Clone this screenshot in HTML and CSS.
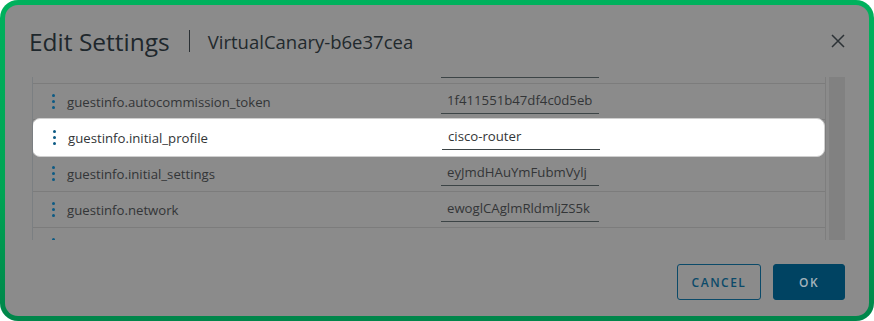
FILE: index.html
```html
<!DOCTYPE html>
<html lang="en">
<head>
    <meta charset="UTF-8">
    <meta name="viewport" content="width=device-width, initial-scale=1.0">
    <title>Edit Settings</title>
    <link rel="stylesheet" href="styles.css">
</head>
<body>

    <div class="frame">
        <div class="modal">
            <div class="modal-header">
                <h2 class="modal-title">Edit Settings</h2>
                <span class="title-sep"></span>
                <span class="vm-name">VirtualCanary-b6e37cea</span>
                <button class="close-btn" aria-label="Close">
                    <svg width="14" height="14" viewBox="0 0 14 14">
                        <path d="M1 1 L13 13 M13 1 L1 13" stroke="#2c3236" stroke-width="1.5" fill="none"/>
                    </svg>
                </button>
            </div>

            <div class="grid-wrap">
                <div class="grid-viewport">
                    <div class="grid-rows">
                        <div class="row">
                            <span class="kebab"><i></i><i></i><i></i></span>
                            <span class="key"></span>
                            <span class="value"></span>
                        </div>
                        <div class="row">
                            <span class="kebab"><i></i><i></i><i></i></span>
                            <span class="key">guestinfo.autocommission_token</span>
                            <span class="value">1f411551b47df4c0d5eb</span>
                        </div>
                        <div class="row selected">
                            <span class="kebab"><i></i><i></i><i></i></span>
                            <span class="key">guestinfo.initial_profile</span>
                            <span class="value">cisco-router</span>
                        </div>
                        <div class="row">
                            <span class="kebab"><i></i><i></i><i></i></span>
                            <span class="key">guestinfo.initial_settings</span>
                            <span class="value">eyJmdHAuYmFubmVylj</span>
                        </div>
                        <div class="row">
                            <span class="kebab"><i></i><i></i><i></i></span>
                            <span class="key">guestinfo.network</span>
                            <span class="value">ewoglCAglmRldmljZS5k</span>
                        </div>
                        <div class="row">
                            <span class="kebab"><i></i><i></i><i></i></span>
                            <span class="key"></span>
                            <span class="value"></span>
                        </div>
                    </div>
                </div>
                <div class="scrollbar"></div>
            </div>

            <div class="modal-footer">
                <button class="btn btn-outline">CANCEL</button>
                <button class="btn btn-primary">OK</button>
            </div>
        </div>
    </div>

</body>
</html>
```

FILE: styles.css
```css
html, body {
    margin: 0;
    padding: 0;
    background: #ffffff;
}
body {
    font-family: "Open Sans", sans-serif;
    color: #2f3133;
}
.frame {
    width: 874px;
    height: 321px;
    box-sizing: border-box;
    padding: 5px;
    border-radius: 18px;
    background: linear-gradient(to bottom, #00b15d, #00a454 60%, #00854a);
}
.modal {
    height: 100%;
    box-sizing: border-box;
    background: #8b8b8b;
    border-radius: 13px;
    padding: 0 24px 0 25px;
    display: flex;
    flex-direction: column;
}
.modal-header {
    display: flex;
    align-items: center;
    height: 72px;
}
.modal-title {
    margin: 0 0 0 -1px;
    font-weight: 400;
    font-size: 24.5px;
    color: #1e272c;
}
.title-sep {
    width: 1px;
    height: 22px;
    background: #2a3034;
    margin: 0 18px 0 19px;
}
.vm-name {
    font-size: 18.5px;
    color: #22292d;
}
.close-btn {
    margin-left: auto;
    background: none;
    border: none;
    padding: 0;
    width: 14px;
    height: 14px;
    display: flex;
    cursor: pointer;
}

.grid-wrap {
    display: flex;
    height: 163px;
    margin-left: 2px;
}
.grid-viewport {
    width: 793px;
    border-left: 1px solid #7b7f82;
    border-right: 1px solid #7e7e7e;
    overflow: hidden;
}
.grid-rows {
    margin-top: -29px;
}
.row {
    display: flex;
    align-items: center;
    height: 36px;
    box-sizing: border-box;
    border-bottom: 1px solid #7c7c7c;
    font-size: 13.2px;
}
.row.selected {
    background: #ffffff;
    border: 1px solid #cfcfcf;
    border-radius: 8px;
    height: 39px;
    margin: -2px 0 -1px -1px;
    padding-left: 1px;
    position: relative;
}
.kebab {
    width: 3px;
    margin: 0 12px 0 19px;
    display: flex;
    flex-direction: column;
    gap: 3px;
}
.kebab i {
    display: block;
    width: 3px;
    height: 3px;
    border-radius: 50%;
    background: #0c5a84;
}
.key {
    width: 374px;
    color: #333537;
}
.value {
    width: 152px;
    height: 18px;
    padding: 0 0 4px 6px;
    margin-top: 1px;
    border-bottom: 1px solid #3c4446;
    white-space: nowrap;
    overflow: hidden;
    color: #333537;
}
.scrollbar {
    width: 16px;
    margin-left: 3px;
    background: #818181;
}

.modal-footer {
    display: flex;
    justify-content: flex-end;
    gap: 12px;
    margin-top: 24px;
}
.btn {
    height: 36px;
    border-radius: 3px;
    font-family: "Open Sans", sans-serif;
    font-size: 12px;
    font-weight: 600;
    letter-spacing: 1.5px;
    cursor: pointer;
}
.btn-outline {
    width: 84px;
    background: transparent;
    border: 1px solid #0b4a69;
    color: #0b4a69;
}
.btn-primary {
    width: 72px;
    background: #004362;
    border: 1px solid #004362;
    color: #a3b3bb;
}
```
